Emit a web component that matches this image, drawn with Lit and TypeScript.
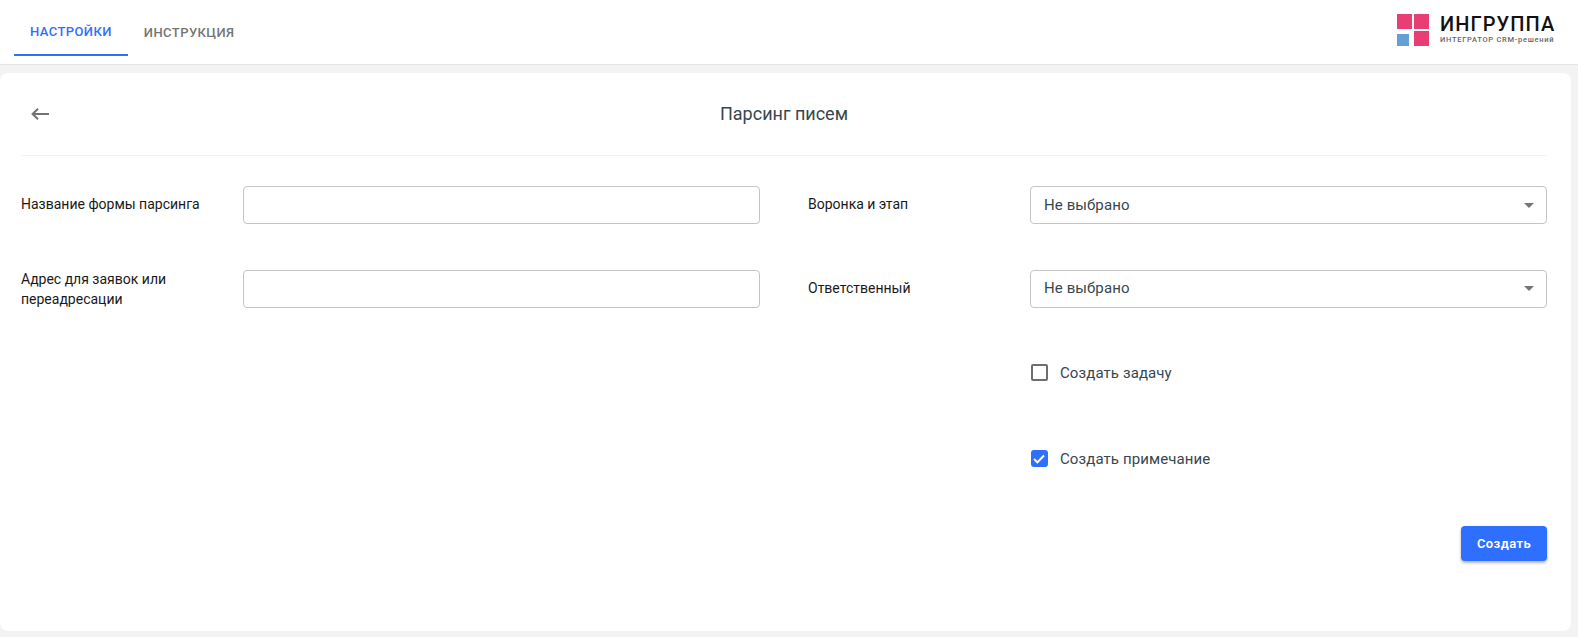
import { LitElement, html, css } from "lit";
import { customElement } from "lit/decorators.js";

@customElement("app-root")
export class AppRoot extends LitElement {
  static styles = css`
    :host { display: block; width: 100%; height: 637px; background: #f3f3f3; font-family: Roboto, "Noto Sans", sans-serif; overflow: hidden; color: #212121; }
    * { box-sizing: border-box; }
    header { height: 65px; background: #fff; border-bottom: 1px solid #e4e4e4; display: flex; justify-content: space-between; padding: 0 24px 0 14px; }
    .tabs { display: flex; }
    .tab { height: 56px; padding: 8px 16px 0; display: flex; align-items: center; font-size: 13px; font-weight: 500; letter-spacing: 0.42px; color: #757575; justify-content: center; }
    .tab.active { color: #2f6fff; border-bottom: 2px solid #2f6fff; }
    .logo { display: flex; gap: 11px; padding-top: 14px; }
    .marks { display: grid; grid-template-columns: 15px 15px; grid-template-rows: 15px 15px; gap: 2px; width: 32px; height: 32px; }
    .marks i { background: #e83e73; display: block; }
    .marks i.blue { background: #659fd6; width: 12px; height: 12px; align-self: end; }
    .brand { display: flex; flex-direction: column; width: 114px; }
    .brand b { font-size: 20px; line-height: 21px; font-weight: 500; letter-spacing: 1.1px; color: #111; white-space: nowrap; }
    .brand span { font-size: 7.5px; line-height: 9px; letter-spacing: 0.72px; color: #666; white-space: nowrap; font-weight: 500; }
    .panel { width: 1571px; height: 558px; margin-top: 8px; background: #fff; border-radius: 8px; padding: 0 24px 0 21px; display: flex; flex-direction: column; }
    .top { height: 83px; flex: none; border-bottom: 1px solid #f1f2f8; display: flex; align-items: center; justify-content: center; position: relative; font-size: 18px; color: #37474f; padding-bottom: 1px; }
    .back { position: absolute; left: 9px; top: 31px; width: 20px; height: 20px; }
    .form { display: grid; grid-template-columns: 1fr 1fr; column-gap: 48px; margin-top: 30px; }
    .col { display: flex; flex-direction: column; }
    .row { display: grid; grid-template-columns: 222px 1fr; height: 84px; }
    .row.tall { height: 86px; }
    .row label { font-size: 14px; line-height: 20px; color: #1a1a1a; padding-top: 8px; }
    .row label.two { padding-top: 0; margin-top: -1px; }
    .field { height: 38px; border: 1px solid #c4c4c4; border-radius: 4px; display: flex; align-items: center; justify-content: space-between; padding: 0 13px; font-size: 15px; letter-spacing: 0.1px; color: #37474f; background: #fff; }
    .field.nudge { padding-bottom: 2px; }
    .caret { width: 0; height: 0; border-left: 5px solid transparent; border-right: 5px solid transparent; border-top: 5px solid #757575; margin-right: -1px; }
    .check { display: flex; align-items: flex-start; gap: 12.5px; font-size: 15px; letter-spacing: 0.1px; line-height: 18px; color: #37474f; padding: 10px 0 0 0.5px; }
    .box { width: 17px; height: 17px; border: 2px solid #6e6e6e; border-radius: 2px; flex: none; }
    .box.on { background: #2f6fff; border: none; border-radius: 3px; display: flex; align-items: center; justify-content: center; }
    .actions { display: flex; justify-content: flex-end; margin-top: 2px; }
    button { width: 86px; height: 35px; border: none; border-radius: 4px; background: #2f6fff; color: #fff; font: 600 13px Roboto, sans-serif; letter-spacing: 0.4px; box-shadow: 0 2px 3px rgba(0,0,0,.3); }
  `;

  render() {
    return html`
      <header>
        <nav class="tabs">
          <div class="tab active">НАСТРОЙКИ</div>
          <div class="tab">ИНСТРУКЦИЯ</div>
        </nav>
        <div class="logo">
          <div class="marks"><i></i><i></i><i class="blue"></i><i></i></div>
          <div class="brand"><b>ИНГРУППА</b><span>ИНТЕГРАТОР CRM-решений</span></div>
        </div>
      </header>
      <main class="panel">
        <div class="top">
          <svg class="back" viewBox="0 0 20 20" fill="none" stroke="#737373" stroke-width="2"><path d="M19 10H2.5M8 4.7 2.6 10 8 15.3"/></svg>
          Парсинг писем
        </div>
        <div class="form">
          <div class="col">
            <div class="row"><label>Название формы парсинга</label><div class="field"></div></div>
            <div class="row"><label class="two">Адрес для заявок или<br />переадресации</label><div class="field"></div></div>
          </div>
          <div class="col">
            <div class="row"><label>Воронка и этап</label><div class="field">Не выбрано<span class="caret"></span></div></div>
            <div class="row"><label>Ответственный</label><div class="field nudge">Не выбрано<span class="caret"></span></div></div>
            <div class="row tall"><span></span><div class="check"><span class="box"></span>Создать задачу</div></div>
            <div class="row"><span></span><div class="check"><span class="box on"><svg width="12" height="10" viewBox="0 0 12 10" fill="none" stroke="#fff" stroke-width="2"><path d="M1 5l3.4 3.4L11 1.5"/></svg></span>Создать примечание</div></div>
          </div>
        </div>
        <div class="actions"><button>Создать</button></div>
      </main>
    `;
  }
}
